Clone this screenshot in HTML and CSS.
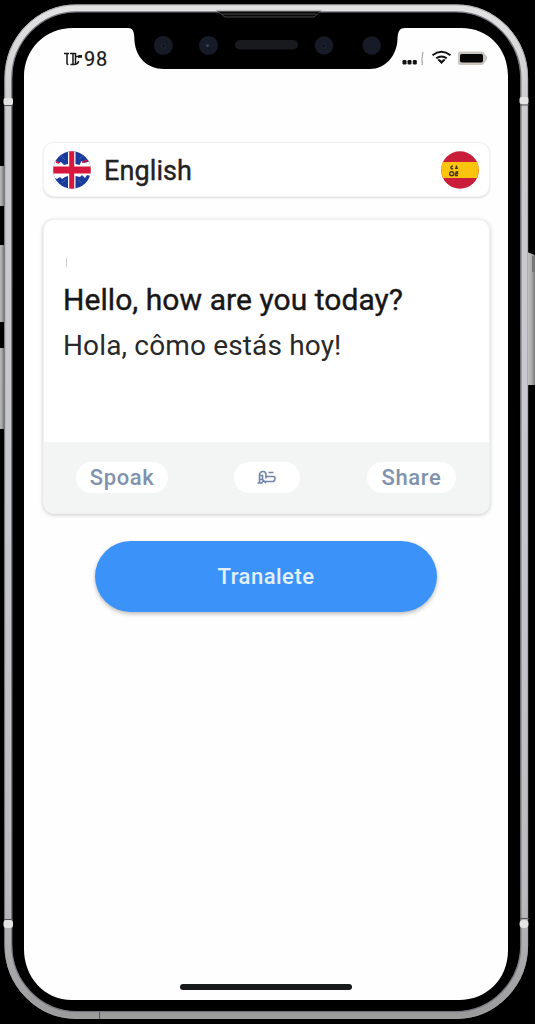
FILE: index.html
```html
<!DOCTYPE html>
<html lang="en">
<head>
<meta charset="utf-8">
<meta name="viewport" content="width=device-width, initial-scale=1">
<title>Translate</title>
<link rel="stylesheet" href="styles.css">
</head>
<body>
<div class="device">
  <svg class="frame" viewBox="0 0 535 1024" aria-hidden="true">
    <defs>
      <linearGradient id="metal" x1="0" y1="0" x2="0" y2="1">
        <stop offset="0" stop-color="#e2e2e2"/><stop offset=".1" stop-color="#cbcbce"/>
        <stop offset=".5" stop-color="#c6c7ce"/><stop offset=".88" stop-color="#bbbabe"/><stop offset="1" stop-color="#9c9b9c"/>
      </linearGradient>
      <linearGradient id="key" x1="0" x2="1" y1="0" y2="0">
        <stop offset="0" stop-color="#c9c9c9"/><stop offset=".6" stop-color="#a9a9a9"/><stop offset="1" stop-color="#777"/>
      </linearGradient>
    </defs>
    <rect width="535" height="1024" fill="#000"/>
    <g fill="url(#key)">
      <rect x="-2" y="166" width="6" height="40"/>
      <rect x="-2" y="245" width="6" height="77"/>
      <rect x="-2" y="348" width="6" height="81"/>
      <path d="M527 252l8 3v130h-8z"/>
    </g>
    <path d="M532 256h3v16h-3z" fill="#777"/>
    <rect x="8.300" y="8.200" width="516" height="1007" rx="68" ry="70" fill="#000" stroke="url(#metal)" stroke-width="7.600"/>
    <rect x="11.700" y="11.800" width="509.200" height="999.800" rx="65" ry="67" fill="none" stroke="#77777f" stroke-width="1.200"/>
    <rect x="5" y="5" width="522.600" height="1013.400" rx="71" ry="73" fill="none" stroke="#a2a2a5" stroke-width=".8"/>
    <path d="M217 11h104l-7 6h-89z" fill="#0a0a0a" stroke="#555" stroke-width=".8"/>
    <path d="M216 10.500h106" stroke="#bbb" stroke-width="1.500"/>
    <path d="M222 14h94" stroke="#444" stroke-width="1"/>
    <g fill="#e4e4e4"><rect x="3.500" y="98" width="9.500" height="7" rx="2"/><rect x="519.500" y="97" width="9" height="7" rx="2"/><rect x="3.500" y="920" width="9.500" height="8" rx="3"/><rect x="519.500" y="920" width="9" height="8" rx="4"/></g>
    <path d="M4 105.500h9M520 105h9M4 919.500h9M520 918.500h9M99.500 1012v7" stroke="#55555b" stroke-width="1"/>
    <path fill="#fefefe" d="M73 28H128C132.500 28 134 31 134.300 37C134.300 57 147 69 164 69H370C385 69 397 56 397.500 39C397.700 31 400 28 405 28H461C489 28 508 49 508 76V950C508 980 486 1000 459 1000H72C44 1000 24 977 24 949V77C24 49 45 28 73 28Z"/>
    <g fill="#171b27"><circle cx="163.300" cy="45.500" r="9.500"/><circle cx="208.500" cy="45.500" r="9.500"/><circle cx="324" cy="45.500" r="9.200"/><circle cx="371.700" cy="45.500" r="9.200"/></g>
    <g fill="#10131b" stroke="#262c3a" stroke-width=".7"><circle cx="163.300" cy="46" r="2"/><circle cx="323.500" cy="46" r="2"/></g>
    <circle cx="207.500" cy="45.500" r="1.300" fill="#40506a"/>
    <rect x="235" y="40" width="63" height="9.500" rx="4.750" fill="#191a1e"/>
  </svg>

  <main class="screen">
    <header class="status">
      <div class="clock">
        <svg width="19" height="14" viewBox="0 0 19 14" fill="none" stroke="#171717" stroke-width="1.500" aria-hidden="true">
          <path d="M0 1.500H5M3 1V11.500Q3 12.500 4.500 12.500M6 1.500H9V12.500M6.500 12.500H10Q14.500 12 14.500 9M11.500 1V12.500M9 1.500H11.500M11.500 4.500H15M14.500 3.800H18" />
          <path d="M14 4.800h4" stroke-width="2"/>
        </svg><span class="digits">98</span>
      </div>
      <svg class="signals" width="87" height="18" viewBox="0 0 87 18" aria-hidden="true">
        <g fill="#111"><rect x="0.500" y="10" width="4" height="4.500" rx="1.200"/><rect x="5.500" y="10" width="4" height="4.500" rx="1.200"/><rect x="10.800" y="10" width="4" height="4.500" rx="1.200"/></g>
        <path d="M21 2q-1.700 6-.7 13" stroke="#888" stroke-width=".9" fill="none"/>
        <path d="M30.500 5.200Q39.500-1.500 48.500 5.200M34.200 8.300Q39.500 4.600 44.800 8.300" stroke="#111" stroke-width="2" fill="none"/>
        <path d="M35.800 9.800h2l1.700 1.200 1.700-1.200h2l-3.700 3.900z" fill="#111" stroke="#111" stroke-width=".8"/>
        <path d="M58 1.500H79.500Q82 1.500 83.200 4.500Q87.400 8 83.200 11.500Q82 15 79.500 15H58Q56 15 56 13V3.500Q56 1.500 58 1.500Z" fill="#cbc6c0"/>
        <rect x="58" y="4" width="23" height="8.500" rx="1.700" fill="#050505"/>
      </svg>
    </header>

    <section class="languages">
      <svg class="flag" viewBox="0 0 38 38" role="img" aria-label="United Kingdom">
        <clipPath id="disc"><circle cx="19" cy="19" r="18.800"/></clipPath>
        <g clip-path="url(#disc)">
          <path fill="#193b9b" d="M0 0h38v38H0z"/>
          <path d="M0 12l3-2 3 2 2-1 3 3 4-1V0h7.500v13l4 1 2-4 3 2 6.500-2v15l-4-1-2 3-3-3-2 2-4.500-1v13H15V25l-3 1-3 2-2-2-3 2-4-2z" fill="#fff"/>
          <path d="M16.200 0h5v38h-5zM0 15.500h38v7H0z" fill="#d8173f"/>
          <path d="M3 11l3 1M29 11.500l5-2" stroke="#d8173f" stroke-width="1.800"/>
          <path d="M7 4l5 5M26 8l5-4M9 32l4-4M25 29l4 3" stroke="#4862ac" stroke-width=".9"/>
        </g>
      </svg>
      <span class="language">English</span>
      <svg class="flag" viewBox="0 0 38 38" role="img" aria-label="Spain">
        <g clip-path="url(#disc)">
          <path fill="#c91e3a" d="M0 0h38v38H0z"/><path fill="#fcc50d" d="M0 11h38v16H0z"/>
          <g fill="none" stroke="#493713" stroke-width="1.400"><path d="M12 15.300a1.500 1.300 0 1 0 0 2.400h-2M15.500 14.500v3.300M14 17.300h3M14.500 21h2v1.500h-2v2h2.500"/><circle cx="10.700" cy="22.700" r="2"/></g>
        </g>
      </svg>
    </section>

    <section class="card">
      <div class="phrases">
        <i class="caret"></i>
        <p class="source">Hello, how are you today?</p>
        <p class="result">Hola, cômo estás hoy!</p>
      </div>
      <div class="actions">
        <button class="pill speak">Spoak</button>
        <button class="pill copy" aria-label="Copy">
          <svg width="19" height="15" viewBox="0 0 19 15" fill="none" stroke="#7185aa" stroke-width="1.600" aria-hidden="true">
            <path d="M2.500 12.500V5Q3 1.500 6 1.500T9 4.500M3 5.500H6M5.500 5V9.500H3M0.500 13H5.500M5 12.500L6.500 10.500L9 13M8 6.500H16.500Q18 6.500 18 8.500T16.500 11.500H8M9 4V8.500M11.500 2.500H16.500"/>
          </svg>
        </button>
        <button class="pill share">Share</button>
      </div>
    </section>

    <button class="translate">Tranalete</button>
    <div class="home"></div>
  </main>
</div>
</body>
</html>
```
FILE: styles.css
```css
* { box-sizing: border-box; }
body { margin: 0; background: #000; font-family: Roboto, "Liberation Sans", sans-serif; }
button { border: 0; padding: 0; font-family: inherit; }
.device { display: grid; width: 535px; height: 1024px; overflow: hidden; }
.frame, .screen { grid-area: 1 / 1; }
.frame { width: 535px; height: 1024px; }
.screen { z-index: 1; display: flex; flex-direction: column; margin: 28px 28px 24px 24px; padding: 22px 18px 10px 19px; }
.status { display: flex; justify-content: space-between; align-items: flex-start; height: 92px; padding: 0 0 0 21px; }
.clock { display: flex; align-items: center; height: 18px; color: #171717; }
.digits { margin-left: 1px; font-size: 20px; line-height: 18px; letter-spacing: .8px; -webkit-text-stroke: .2px #171717; }
.languages { display: flex; align-items: center; height: 55px; margin-right: -1px; padding: 0 10px 0 9px; border: 1px solid #f0f2f3; border-radius: 11px; background: #fff; box-shadow: 0 1px 2px #0002; }
.flag { width: 38px; height: 38px; }
.language { flex: 1; margin-left: 13px; padding-top: 3px; font-size: 27px; font-weight: 400; line-height: 32px; color: #222; -webkit-text-stroke: .4px #222; letter-spacing: .1px; }
.card { display: flex; flex-direction: column; height: 295px; margin: 22px -1px 0 0; border: 1px solid #eff1f2; border-radius: 11px; overflow: hidden; background: #fff; box-shadow: 0 1px 4px #0003; }
.phrases { flex: 1; padding: 38px 19px 0; }
.caret { display: block; width: 1px; height: 9px; margin-left: 3px; background: #ccc; }
.phrases p { margin: 0; white-space: nowrap; }
.source { padding-top: 15px; font-size: 30px; line-height: 36px; letter-spacing: .06px; color: #171717; -webkit-text-stroke: .4px #171717; }
.result { padding-top: 12px; font-size: 28px; line-height: 32px; letter-spacing: .15px; color: #292929; }
.actions { display: flex; justify-content: space-between; align-items: flex-start; height: 71px; padding: 20px 33px 0 32px; background: #f3f4f4; }
.pill { display: grid; place-items: center; height: 31px; border-radius: 16px; background: #fff; color: #8092ae; font-size: 22px; font-weight: 500; line-height: 30px; letter-spacing: .6px; }
.speak { width: 92px; }
.copy { width: 66px; margin-left: -2px; }
.share { width: 89px; }
.translate { align-self: center; width: 342px; height: 71px; margin-top: 27px; border-radius: 35.5px; background: #3b93f9; color: #e3f0ff; font-size: 22px; font-weight: 500; letter-spacing: .5px; box-shadow: 0 2px 4px #0004; }
.home { align-self: center; width: 172px; height: 6px; margin-top: auto; border-radius: 3px; background: #171a1a; }
```
